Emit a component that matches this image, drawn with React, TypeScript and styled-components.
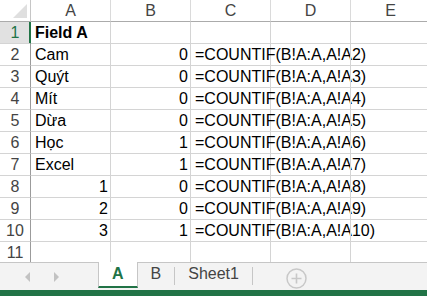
import React from "react";
import styled, { createGlobalStyle } from "styled-components";

const Global = createGlobalStyle`
  html, body { margin: 0; padding: 0; background: #ffffff; }
  body { font-family: "Liberation Sans", Arial, sans-serif; }
`;

const Window = styled.div`
  width: 427px;
  height: 296px;
  display: flex;
  flex-direction: column;
  overflow: hidden;
  background: #ffffff;
`;

const GridArea = styled.div`
  flex: 1;
  overflow: hidden;
`;

const Grid = styled.div`
  display: grid;
  grid-template-columns: 31px repeat(5, 80px);
  grid-auto-rows: 22px;
`;

const Corner = styled.div`
  position: relative;
  border-right: 1px solid #c6c6c6;
  border-bottom: 1px solid #ababab;
  background: #ffffff;
`;

const CornerTriangle = styled.div`
  position: absolute;
  right: 3px;
  bottom: 3px;
  width: 0;
  height: 0;
  border-left: 14px solid transparent;
  border-bottom: 14px solid #dfdfdf;
`;

const ColHeader = styled.div`
  border-right: 1px solid #dadada;
  border-bottom: 1px solid #ababab;
  display: flex;
  align-items: center;
  justify-content: center;
  font-size: 16px;
  color: #444444;
  background: #ffffff;
`;

const RowHeader = styled.div<{ $active?: boolean }>`
  border-right: 1px solid ${(p) => (p.$active ? "#217346" : "#9b9b9b")};
  border-bottom: 1px solid #d4d4d4;
  display: flex;
  align-items: flex-end;
  justify-content: center;
  padding-bottom: 1px;
  box-sizing: border-box;
  font-size: 16px;
  line-height: 18px;
  color: ${(p) => (p.$active ? "#217346" : "#444444")};
  background: ${(p) => (p.$active ? "#e1e1e1" : "#ffffff")};
  ${(p) => (p.$active ? "box-shadow: inset -1px 0 0 #217346;" : "")}
`;

const Cell = styled.div<{ $align?: "left" | "right"; $bold?: boolean }>`
  border-right: 1px solid #d4d4d4;
  border-bottom: 1px solid #d4d4d4;
  display: flex;
  align-items: flex-end;
  justify-content: ${(p) => (p.$align === "right" ? "flex-end" : "flex-start")};
  padding: 0 2px 1px 4px;
  box-sizing: border-box;
  font-size: 16px;
  line-height: 18px;
  font-weight: ${(p) => (p.$bold ? 700 : 400)};
  color: #000000;
  white-space: nowrap;
  overflow: visible;
  min-width: 0;
`;

const TabBar = styled.div`
  height: 28px;
  flex: none;
  background: #f3f3f3;
  border-top: 1px solid #c6c6c6;
  display: flex;
  align-items: flex-start;
  box-sizing: border-box;
`;

const NavArea = styled.div`
  width: 98px;
  height: 27px;
  display: flex;
  align-items: center;
  padding-left: 25px;
  gap: 24px;
  box-sizing: border-box;
`;

const Arrow = styled.div<{ $dir: "left" | "right" }>`
  width: 0;
  height: 0;
  border-top: 5px solid transparent;
  border-bottom: 5px solid transparent;
  ${(p) =>
    p.$dir === "left"
      ? "border-right: 5px solid #c2c2c2;"
      : "border-left: 5px solid #c2c2c2;"}
`;

const Tab = styled.div<{ $active?: boolean }>`
  height: 26px;
  margin-top: -1px;
  padding: 0 13px;
  display: flex;
  align-items: center;
  font-size: 16px;
  color: ${(p) => (p.$active ? "#217346" : "#444444")};
  font-weight: ${(p) => (p.$active ? 700 : 400)};
  background: ${(p) => (p.$active ? "#ffffff" : "transparent")};
  border-bottom: ${(p) => (p.$active ? "2px solid #217346" : "2px solid transparent")};
  ${(p) => (p.$active ? "border-left: 1px solid #c6c6c6; border-right: 1px solid #c6c6c6;" : "")}
  box-sizing: border-box;
`;

const TabSep = styled.div`
  width: 1px;
  height: 18px;
  margin-top: 4px;
  background: #c6c6c6;
`;

const AddButton = styled.div`
  margin-left: 33px;
  margin-top: 5px;
  width: 21px;
  height: 21px;
  display: flex;
  align-items: center;
  justify-content: center;
`;

const GreenBar = styled.div`
  height: 6px;
  flex: none;
  background: #217346;
`;

type CellData = { v: string; right?: boolean; bold?: boolean };

const rows: CellData[][] = [
  [{ v: "Field A", bold: true }, { v: "" }, { v: "" }, { v: "" }, { v: "" }],
  [{ v: "Cam" }, { v: "0", right: true }, { v: "=COUNTIF(B!A:A,A!A2)" }, { v: "" }, { v: "" }],
  [{ v: "Quýt" }, { v: "0", right: true }, { v: "=COUNTIF(B!A:A,A!A3)" }, { v: "" }, { v: "" }],
  [{ v: "Mít" }, { v: "0", right: true }, { v: "=COUNTIF(B!A:A,A!A4)" }, { v: "" }, { v: "" }],
  [{ v: "Dừa" }, { v: "0", right: true }, { v: "=COUNTIF(B!A:A,A!A5)" }, { v: "" }, { v: "" }],
  [{ v: "Học" }, { v: "1", right: true }, { v: "=COUNTIF(B!A:A,A!A6)" }, { v: "" }, { v: "" }],
  [{ v: "Excel" }, { v: "1", right: true }, { v: "=COUNTIF(B!A:A,A!A7)" }, { v: "" }, { v: "" }],
  [{ v: "1", right: true }, { v: "0", right: true }, { v: "=COUNTIF(B!A:A,A!A8)" }, { v: "" }, { v: "" }],
  [{ v: "2", right: true }, { v: "0", right: true }, { v: "=COUNTIF(B!A:A,A!A9)" }, { v: "" }, { v: "" }],
  [{ v: "3", right: true }, { v: "1", right: true }, { v: "=COUNTIF(B!A:A,A!A10)" }, { v: "" }, { v: "" }],
  [{ v: "" }, { v: "" }, { v: "" }, { v: "" }, { v: "" }],
];

const cols = ["A", "B", "C", "D", "E"];

export default function App() {
  return (
    <Window>
      <Global />
      <GridArea>
        <Grid>
          <Corner>
            <CornerTriangle />
          </Corner>
          {cols.map((c) => (
            <ColHeader key={c}>{c}</ColHeader>
          ))}
          {rows.map((r, i) => (
            <React.Fragment key={i}>
              <RowHeader $active={i === 0}>{i + 1}</RowHeader>
              {r.map((c, j) => (
                <Cell key={j} $align={c.right ? "right" : "left"} $bold={c.bold}>
                  {c.v}
                </Cell>
              ))}
            </React.Fragment>
          ))}
        </Grid>
      </GridArea>
      <TabBar>
        <NavArea>
          <Arrow $dir="left" />
          <Arrow $dir="right" />
        </NavArea>
        <Tab $active>A</Tab>
        <Tab>B</Tab>
        <TabSep />
        <Tab>Sheet1</Tab>
        <TabSep />
        <AddButton>
          <svg width="21" height="21" viewBox="0 0 21 21">
            <circle cx="10.5" cy="10.5" r="9.5" fill="none" stroke="#c8c8c8" strokeWidth="1.5" />
            <path d="M10.5 5.5v10M5.5 10.5h10" stroke="#c8c8c8" strokeWidth="1.6" />
          </svg>
        </AddButton>
      </TabBar>
      <GreenBar />
    </Window>
  );
}
